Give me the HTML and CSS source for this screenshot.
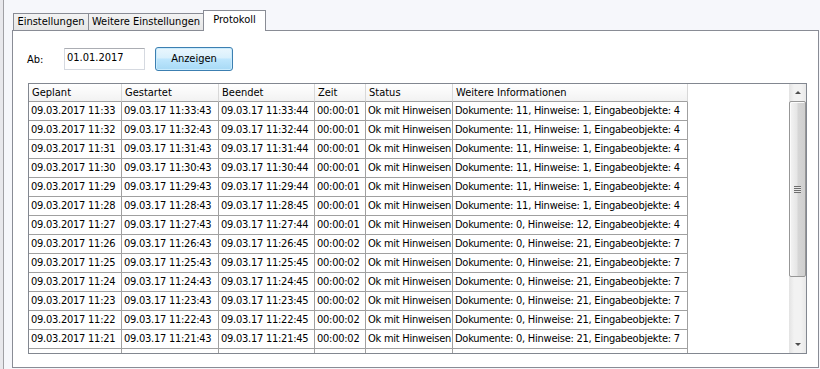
FILE: index.html
```html
<!DOCTYPE html>
<html lang="de">
<head>
<meta charset="utf-8">
<title>Protokoll</title>
<link rel="stylesheet" href="styles.css">
</head>
<body>
<div class="frame">
  <div class="tabs">
    <div class="tab tab-1">Einstellungen</div>
    <div class="tab tab-2">Weitere Einstellungen</div>
    <div class="tab tab-3 active">Protokoll</div>
  </div>
  <div class="panel">
    <div class="toolbar">
      <span class="label">Ab:</span>
      <div class="input">01.01.2017</div>
      <div class="button">Anzeigen</div>
    </div>
    <div class="dgv">
      <div class="grid-area">
        <div class="grid">
          <div class="hcell">Geplant</div><div class="hcell">Gestartet</div><div class="hcell">Beendet</div><div class="hcell">Zeit</div><div class="hcell">Status</div><div class="hcell">Weitere Informationen</div>

          <div class="cell">09.03.2017 11:33</div><div class="cell">09.03.17 11:33:43</div><div class="cell">09.03.17 11:33:44</div><div class="cell">00:00:01</div><div class="cell">Ok mit Hinweisen</div><div class="cell">Dokumente: 11, Hinweise: 1, Eingabeobjekte: 4</div>
          <div class="cell">09.03.2017 11:32</div><div class="cell">09.03.17 11:32:43</div><div class="cell">09.03.17 11:32:44</div><div class="cell">00:00:01</div><div class="cell">Ok mit Hinweisen</div><div class="cell">Dokumente: 11, Hinweise: 1, Eingabeobjekte: 4</div>
          <div class="cell">09.03.2017 11:31</div><div class="cell">09.03.17 11:31:43</div><div class="cell">09.03.17 11:31:44</div><div class="cell">00:00:01</div><div class="cell">Ok mit Hinweisen</div><div class="cell">Dokumente: 11, Hinweise: 1, Eingabeobjekte: 4</div>
          <div class="cell">09.03.2017 11:30</div><div class="cell">09.03.17 11:30:43</div><div class="cell">09.03.17 11:30:44</div><div class="cell">00:00:01</div><div class="cell">Ok mit Hinweisen</div><div class="cell">Dokumente: 11, Hinweise: 1, Eingabeobjekte: 4</div>
          <div class="cell">09.03.2017 11:29</div><div class="cell">09.03.17 11:29:43</div><div class="cell">09.03.17 11:29:44</div><div class="cell">00:00:01</div><div class="cell">Ok mit Hinweisen</div><div class="cell">Dokumente: 11, Hinweise: 1, Eingabeobjekte: 4</div>
          <div class="cell">09.03.2017 11:28</div><div class="cell">09.03.17 11:28:43</div><div class="cell">09.03.17 11:28:45</div><div class="cell">00:00:01</div><div class="cell">Ok mit Hinweisen</div><div class="cell">Dokumente: 11, Hinweise: 1, Eingabeobjekte: 4</div>
          <div class="cell">09.03.2017 11:27</div><div class="cell">09.03.17 11:27:43</div><div class="cell">09.03.17 11:27:44</div><div class="cell">00:00:01</div><div class="cell">Ok mit Hinweisen</div><div class="cell">Dokumente: 0, Hinweise: 12, Eingabeobjekte: 4</div>
          <div class="cell">09.03.2017 11:26</div><div class="cell">09.03.17 11:26:43</div><div class="cell">09.03.17 11:26:45</div><div class="cell">00:00:02</div><div class="cell">Ok mit Hinweisen</div><div class="cell">Dokumente: 0, Hinweise: 21, Eingabeobjekte: 7</div>
          <div class="cell">09.03.2017 11:25</div><div class="cell">09.03.17 11:25:43</div><div class="cell">09.03.17 11:25:45</div><div class="cell">00:00:02</div><div class="cell">Ok mit Hinweisen</div><div class="cell">Dokumente: 0, Hinweise: 21, Eingabeobjekte: 7</div>
          <div class="cell">09.03.2017 11:24</div><div class="cell">09.03.17 11:24:43</div><div class="cell">09.03.17 11:24:45</div><div class="cell">00:00:02</div><div class="cell">Ok mit Hinweisen</div><div class="cell">Dokumente: 0, Hinweise: 21, Eingabeobjekte: 7</div>
          <div class="cell">09.03.2017 11:23</div><div class="cell">09.03.17 11:23:43</div><div class="cell">09.03.17 11:23:45</div><div class="cell">00:00:02</div><div class="cell">Ok mit Hinweisen</div><div class="cell">Dokumente: 0, Hinweise: 21, Eingabeobjekte: 7</div>
          <div class="cell">09.03.2017 11:22</div><div class="cell">09.03.17 11:22:43</div><div class="cell">09.03.17 11:22:45</div><div class="cell">00:00:02</div><div class="cell">Ok mit Hinweisen</div><div class="cell">Dokumente: 0, Hinweise: 21, Eingabeobjekte: 7</div>
          <div class="cell">09.03.2017 11:21</div><div class="cell">09.03.17 11:21:43</div><div class="cell">09.03.17 11:21:45</div><div class="cell">00:00:02</div><div class="cell">Ok mit Hinweisen</div><div class="cell">Dokumente: 0, Hinweise: 21, Eingabeobjekte: 7</div>
          <div class="cell blank"></div><div class="cell blank"></div><div class="cell blank"></div><div class="cell blank"></div><div class="cell blank"></div><div class="cell blank"></div>
        </div>
      </div>
      <div class="scrollbar">
        <div class="sb-btn"><span class="arrow-up"></span></div>
        <div class="sb-track">
          <div class="sb-thumb"><span class="grip"></span></div>
        </div>
        <div class="sb-btn"><span class="arrow-down"></span></div>
      </div>
    </div>
  </div>
</div>
</body>
</html>
```

FILE: styles.css
```css
* { box-sizing: border-box; }

html, body {
  margin: 0;
  padding: 0;
}

body {
  width: 820px;
  height: 369px;
  overflow: hidden;
  background: #e8e8ec;
  font-family: "DejaVu Sans Condensed", "DejaVu Sans", sans-serif;
  font-size: 11px;
  color: #000;
}

.frame {
  margin-left: 3px;
  height: 369px;
  border-left: 1px solid #a0a0a4;
  background: #f6f7fb;
  padding: 10px 1px 0 8px;
}

/* Tabs */
.tabs {
  display: flex;
  align-items: flex-end;
  height: 20px;
  padding-left: 1px;
}

.tab {
  height: 17px;
  border: 1px solid #898c95;
  border-bottom: none;
  background: linear-gradient(#f3f3f3, #e6e6e6);
  text-align: center;
  line-height: 16px;
  white-space: nowrap;
  margin-right: -1px;
}

.tab-1 { width: 76px; }
.tab-2 { width: 116px; }
.tab-3 { width: 63px; }

.tab.active {
  height: 21px;
  background: #fff;
  margin-bottom: -1px;
  line-height: 17px;
  position: relative;
  z-index: 1;
}

/* Panel */
.panel {
  width: 807px;
  height: 338px;
  border: 1px solid #898c95;
  background: #fff;
  padding-top: 16px;
}

.toolbar {
  display: flex;
  align-items: center;
  height: 24px;
  padding-left: 14px;
}

.label {
  width: 37px;
}

.input {
  width: 81px;
  height: 22px;
  border: 1px solid #d5d9e0;
  border-top-color: #abadb3;
  padding-left: 2px;
  line-height: 18px;
}

.button {
  margin-left: 10px;
  width: 78px;
  height: 24px;
  border: 1px solid #3c7fb1;
  border-radius: 3px;
  background: linear-gradient(#eaf6fd 0%, #d9f0fc 45%, #bee6fd 50%, #a7d9f5 100%);
  box-shadow: inset 0 0 0 1px #c9ebfd;
  text-align: center;
  line-height: 22px;
}

/* Data grid */
.dgv {
  display: flex;
  margin: 12px 0 0 15px;
  width: 779px;
  height: 271px;
  border: 1px solid #828790;
}

.grid-area {
  flex: 1;
  overflow: hidden;
  background: #fff;
}

.grid {
  display: grid;
  grid-template-columns: 93px 97px 96px 51px 87px 235px;
  width: 659px;
  letter-spacing: -0.25px;
}

.hcell {
  height: 18px;
  line-height: 17px;
  padding-left: 3px;
  border-right: 1px solid #d8d8d8;
  border-bottom: 1px solid #a0a0a0;
  background: linear-gradient(#ffffff, #f2f2f2);
  white-space: nowrap;
  overflow: hidden;
  letter-spacing: 0;
}

.cell {
  height: 19px;
  line-height: 18px;
  padding-left: 2px;
  border-right: 1px solid #a0a0a0;
  border-bottom: 1px solid #a0a0a0;
  white-space: nowrap;
  overflow: hidden;
}

/* Scrollbar */
.scrollbar {
  width: 17px;
  display: flex;
  flex-direction: column;
  background: linear-gradient(to right, #e3e3e3, #f2f2f2 30%, #f2f2f2 70%, #e8e8e8);
}

.sb-btn {
  height: 17px;
  display: flex;
  align-items: center;
  justify-content: center;
}

.arrow-up {
  width: 0;
  height: 0;
  border-left: 3px solid transparent;
  border-right: 3px solid transparent;
  border-bottom: 3px solid #4d4d4d;
}

.arrow-down {
  width: 0;
  height: 0;
  border-left: 3px solid transparent;
  border-right: 3px solid transparent;
  border-top: 3px solid #4d4d4d;
}

.sb-track {
  flex: 1;
}

.sb-thumb {
  height: 176px;
  border: 1px solid #979797;
  border-radius: 2px;
  background: linear-gradient(to right, #f4f4f4, #e6e6e6 45%, #d6d6d6 55%, #cfcfcf);
  box-shadow: inset 1px 1px 0 #fbfbfb;
  display: flex;
  align-items: center;
  justify-content: center;
}

.grip {
  width: 7px;
  height: 7px;
  background: repeating-linear-gradient(#6e6e6e 0 1px, #e8e8e8 1px 2px);
}
```
